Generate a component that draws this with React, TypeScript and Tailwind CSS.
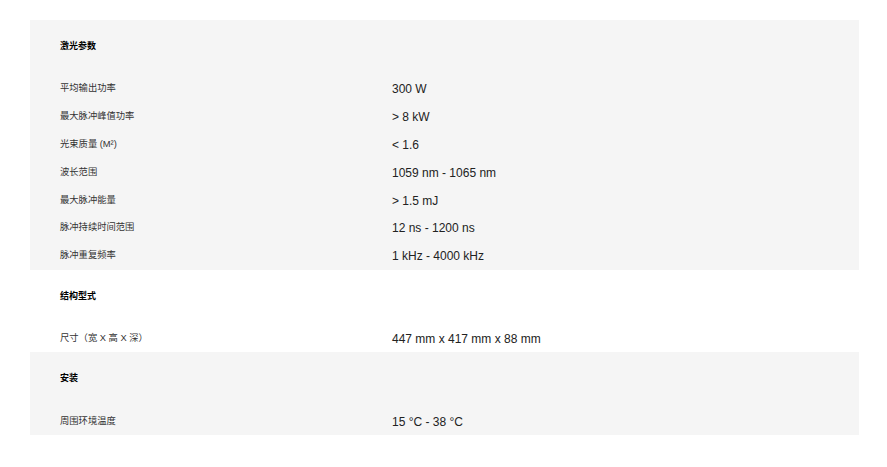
import React from 'react';

interface SpecRow {
  label: string;
  value: string;
}

interface SpecSection {
  title: string;
  grey: boolean;
  rows: SpecRow[];
}

const sections: SpecSection[] = [
  {
    title: '激光参数',
    grey: true,
    rows: [
      { label: '平均输出功率', value: '300 W' },
      { label: '最大脉冲峰值功率', value: '> 8 kW' },
      { label: '光束质量 (M²)', value: '< 1.6' },
      { label: '波长范围', value: '1059 nm - 1065 nm' },
      { label: '最大脉冲能量', value: '> 1.5 mJ' },
      { label: '脉冲持续时间范围', value: '12 ns - 1200 ns' },
      { label: '脉冲重复频率', value: '1 kHz - 4000 kHz' },
    ],
  },
  {
    title: '结构型式',
    grey: false,
    rows: [{ label: '尺寸（宽 X 高 X 深）', value: '447 mm x 417 mm x 88 mm' }],
  },
  {
    title: '安装',
    grey: true,
    rows: [{ label: '周围环境温度', value: '15 °C - 38 °C' }],
  },
];

const font = { fontFamily: '"Liberation Sans", Arial, "Noto Sans CJK SC", sans-serif' };

export default function App() {
  return (
    <div className="w-[887px] h-[467px] bg-white pt-[20px] pl-[30px]" style={font}>
      <div className="w-[829px] flex flex-col">
        {sections.map((section) => (
          <div key={section.title} className={section.grey ? 'bg-[#f5f5f5]' : 'bg-white'}>
            {/* Section heading */}
            <div className="h-[55px] pl-[30px] pt-[19px]">
              <h3 className="text-[9px] leading-[14px] font-bold text-black">{section.title}</h3>
            </div>
            {/* Spec rows */}
            {section.rows.map((row) => (
              <div key={row.label} className="h-[27.8px] pt-[1px] flex items-center">
                <span className="w-[362px] pl-[30px] text-[9.3px] text-[#333]">{row.label}</span>
                <span className="text-[12px] text-[#222]">{row.value}</span>
              </div>
            ))}
          </div>
        ))}
      </div>
    </div>
  );
}
